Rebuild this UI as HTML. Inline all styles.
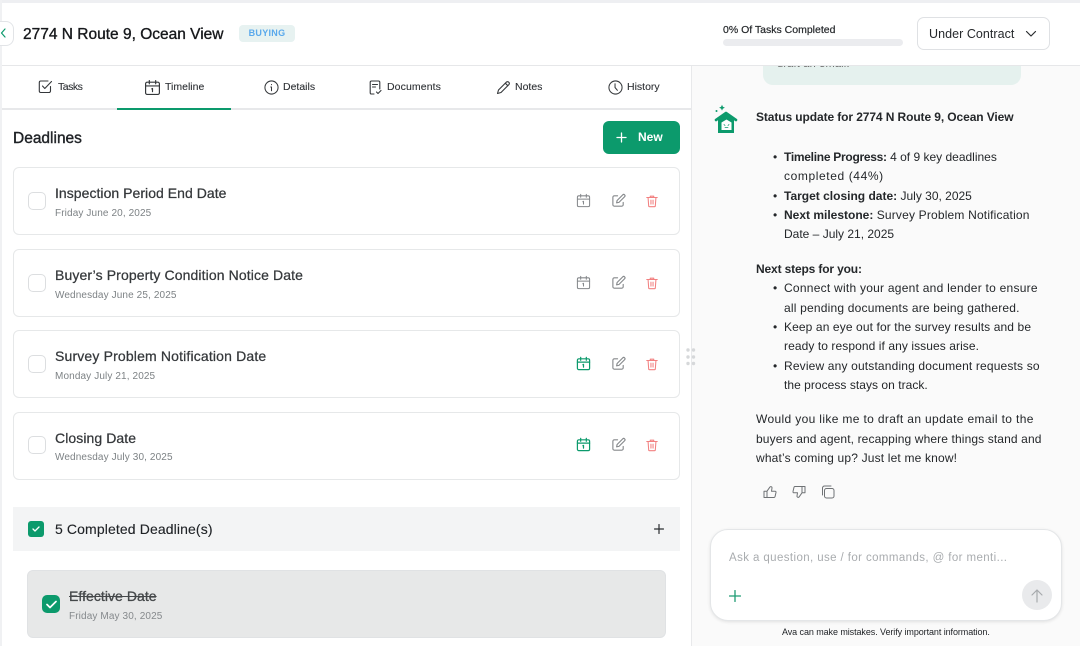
<!DOCTYPE html>
<html><head><meta charset="utf-8"><style>
html,body{margin:0;padding:0}
body{width:1080px;height:646px;overflow:hidden;position:relative;background:#fff;font-family:"Liberation Sans",sans-serif;color:#1f2226}
div,span.a,svg.a{position:absolute;box-sizing:border-box}
.t{white-space:nowrap}
.tab{font-size:10.5px;color:#2e3135;top:81px;line-height:12px;-webkit-text-stroke:.1px #2e3135}
.card{left:13px;width:667px;height:68px;background:#fff;border:1px solid #e6e8e9;border-radius:6px}
.cb{left:28px;width:18px;height:18px;border:1px solid #dcdee0;border-radius:5px;background:#fff}
.ti{left:55px;font-size:14px;line-height:16px;color:#35383b;font-weight:400;-webkit-text-stroke:.25px #35383b}
.dt{left:55px;font-size:10px;line-height:12px;color:#7d8285;letter-spacing:.12px}
.m{left:756px;font-size:12px;line-height:16px;color:#24272a}
b{font-weight:700}
svg{fill:none;stroke-linecap:round;stroke-linejoin:round}
</style></head><body>
<svg width="0" height="0" style="position:absolute"><defs>
<symbol id="cal" viewBox="0 0 16 16"><rect x="1.500" y="3" width="13" height="11.500" rx="1.500"/><path d="M1.500 6.500h13M5 1.500v3M11 1.500v3M7.300 9.300 8 8.900v3"/></symbol>
<symbol id="pen" viewBox="0 0 16 16"><path d="M7 3H3.500A1.500 1.500 0 0 0 2 4.500V12.500A1.500 1.500 0 0 0 3.500 14H11.500A1.500 1.500 0 0 0 13 12.500V10"/><path d="M6 10.500 6.500 8 12.500 2a1.300 1.300 0 0 1 2 2L8.500 10z"/></symbol>
<symbol id="tr" viewBox="0 0 16 16"><path d="M2 4h12M6 4V2.500h4V4M3.500 4l.7 9.500a1 1 0 0 0 1 1h5.600a1 1 0 0 0 1-1L12.500 4M6.800 7v4.500M9.200 7v4.500"/></symbol>
</defs></svg>

<!-- right panel -->
<div style="left:691px;top:65px;width:389px;height:581px;background:#fafafa;border-left:1px solid #e8e9eb"></div>
<div style="left:763px;top:50px;width:258px;height:35px;background:#e5f1ee;border-radius:0 0 10px 10px"></div>

<!-- header -->
<div style="left:0;top:0;width:1080px;height:66px;background:#fff;border-top:3px solid #eeeff2;border-bottom:1px solid #e6e7e9"></div>
<div style="left:777px;top:66px;width:80px;height:4px;overflow:hidden"><div class="t" style="left:0;top:-8px;font-size:11px;line-height:13px;color:#666;letter-spacing:.2px">draft an email.</div></div>
<div style="left:0;top:0;width:2px;height:646px;background:#f0f1f3"></div>
<div style="left:-12px;top:21px;width:26px;height:25px;background:#fff;border:1px solid #e2e4e7;border-radius:8px"></div>
<svg class="a" style="left:0;top:28px;stroke:#0c9a6c;stroke-width:1.200" width="6" height="10"><path d="M5 1 1.500 5 5 9"/></svg>
<div class="t" style="left:23px;top:25px;font-size:15.500px;line-height:19px;color:#17191c;-webkit-text-stroke:.35px #17191c">2774 N Route 9, Ocean View</div>
<div class="t" style="left:239px;top:25px;width:56px;height:17px;background:#e7f2f1;border-radius:4px;text-align:center;font-size:9px;line-height:17px;font-weight:700;color:#5aa9ec;letter-spacing:.3px">BUYING</div>
<div class="t" style="left:723px;top:24px;font-size:10.500px;line-height:13px;color:#26292c;-webkit-text-stroke:.2px #26292c">0% Of Tasks Completed</div>
<div style="left:723px;top:39px;width:180px;height:7px;background:#ebecef;border-radius:4px"></div>
<div style="left:917px;top:17px;width:133px;height:33px;background:#fff;border:1px solid #dfe1e4;border-radius:7px"></div>
<div class="t" style="left:929px;top:27px;font-size:12.500px;line-height:15px;color:#26292c;letter-spacing:.05px">Under Contract</div>
<svg class="a" style="left:1025px;top:30px;stroke:#2a2d30;stroke-width:1.200" width="12" height="8"><path d="M1.500 1.500 6 6l4.500-4.500"/></svg>

<!-- tabs -->
<div style="left:2px;top:108px;width:689px;height:2px;background:#e7e8ea"></div>
<div style="left:117px;top:108px;width:114px;height:2px;background:#0c9a6c"></div>
<svg class="a" style="left:38px;top:79px;stroke:#34373a;stroke-width:1.100" width="15" height="15" viewBox="0 0 15 15"><path d="M12.500 7.500V12a1.500 1.500 0 0 1-1.500 1.500H2.800A1.500 1.500 0 0 1 1.300 12V3.500A1.500 1.500 0 0 1 2.800 2h7.200"/><path d="M4.500 7l2.300 2.500L13.500 2.500"/></svg>
<div class="tab t" style="left:58px;letter-spacing:-.5px">Tasks</div>
<svg class="a" style="left:144px;top:79px;stroke:#34373a;stroke-width:1.100" width="17" height="17"><use href="#cal"/></svg>
<div class="tab t" style="left:165px">Timeline</div>
<svg class="a" style="left:264px;top:80px;stroke:#34373a;stroke-width:1.100" width="15" height="15" viewBox="0 0 16 16"><circle cx="8" cy="8" r="7"/><path d="M8 7.500V11.500M7.200 7.500H8M8 4.800v.3"/></svg>
<div class="tab t" style="left:283px">Details</div>
<svg class="a" style="left:369px;top:80px;stroke:#34373a;stroke-width:1.100" width="14" height="15" viewBox="0 0 14 15"><path d="M5 14H2.500A1.300 1.300 0 0 1 1.200 12.700V2.300A1.300 1.300 0 0 1 2.500 1h7A1.300 1.300 0 0 1 10.800 2.300V9M3.500 4.500h5M3.500 7h3M7.500 12l1.500 1.500 3-3"/></svg>
<div class="tab t" style="left:387px;letter-spacing:.1px">Documents</div>
<svg class="a" style="left:496px;top:80px;stroke:#34373a;stroke-width:1.100" width="15" height="15" viewBox="0 0 15 15"><path d="M1.500 13.500 2.500 10 10.500 2a1.800 1.800 0 0 1 2.500 2.500L5 12.500zM9.300 3.200l2.500 2.500"/></svg>
<div class="tab t" style="left:515px">Notes</div>
<svg class="a" style="left:608px;top:80px;stroke:#34373a;stroke-width:1.100" width="15" height="15" viewBox="0 0 16 16"><circle cx="8" cy="8" r="7"/><path d="M7.500 4v4l2.500 3"/></svg>
<div class="tab t" style="left:627px">History</div>

<div class="t" style="left:13px;top:130px;font-size:15.500px;line-height:18px;color:#1f2226;-webkit-text-stroke:.4px #1f2226">Deadlines</div>
<div style="left:603px;top:121px;width:77px;height:33px;background:#0c9a6c;border-radius:6px"></div>
<svg class="a" style="left:616px;top:132px;stroke:#fff;stroke-width:1.300" width="11" height="11"><path d="M5.500 1v9M1 5.500h9"/></svg>
<div class="t" style="left:638px;top:130px;font-size:12px;line-height:15px;color:#fff;font-weight:700">New</div>

<!-- cards -->
<div class="card" style="top:167px"></div>
<div class="cb" style="top:192px"></div>
<div class="ti t" style="top:185px;letter-spacing:.04px">Inspection Period End Date</div>
<div class="dt t" style="top:208px">Friday June 20, 2025</div>
<svg class="a" style="left:576px;top:193px;stroke:#85888b;stroke-width:1.100" width="15" height="15"><use href="#cal"/></svg>
<svg class="a" style="left:611px;top:193px;stroke:#85888b;stroke-width:1.200" width="15" height="15"><use href="#pen"/></svg>
<svg class="a" style="left:645px;top:194px;stroke:#f28080;stroke-width:1.200" width="14" height="14"><use href="#tr"/></svg>

<div class="card" style="top:249px"></div>
<div class="cb" style="top:274px"></div>
<div class="ti t" style="top:267px;letter-spacing:.11px">Buyer’s Property Condition Notice Date</div>
<div class="dt t" style="top:290px">Wednesday June 25, 2025</div>
<svg class="a" style="left:576px;top:275px;stroke:#85888b;stroke-width:1.100" width="15" height="15"><use href="#cal"/></svg>
<svg class="a" style="left:611px;top:275px;stroke:#85888b;stroke-width:1.200" width="15" height="15"><use href="#pen"/></svg>
<svg class="a" style="left:645px;top:276px;stroke:#f28080;stroke-width:1.200" width="14" height="14"><use href="#tr"/></svg>

<div class="card" style="top:330px"></div>
<div class="cb" style="top:355px"></div>
<div class="ti t" style="top:348px;letter-spacing:.16px">Survey Problem Notification Date</div>
<div class="dt t" style="top:371px">Monday July 21, 2025</div>
<svg class="a" style="left:576px;top:356px;stroke:#0c9a6c;stroke-width:1.300" width="15" height="15"><use href="#cal"/></svg>
<svg class="a" style="left:611px;top:356px;stroke:#85888b;stroke-width:1.200" width="15" height="15"><use href="#pen"/></svg>
<svg class="a" style="left:645px;top:357px;stroke:#f28080;stroke-width:1.200" width="14" height="14"><use href="#tr"/></svg>

<div class="card" style="top:412px"></div>
<div class="cb" style="top:436px"></div>
<div class="ti t" style="top:430px;letter-spacing:.08px">Closing Date</div>
<div class="dt t" style="top:452px">Wednesday July 30, 2025</div>
<svg class="a" style="left:576px;top:437px;stroke:#0c9a6c;stroke-width:1.300" width="15" height="15"><use href="#cal"/></svg>
<svg class="a" style="left:611px;top:437px;stroke:#85888b;stroke-width:1.200" width="15" height="15"><use href="#pen"/></svg>
<svg class="a" style="left:645px;top:438px;stroke:#f28080;stroke-width:1.200" width="14" height="14"><use href="#tr"/></svg>

<!-- drag handle -->
<svg class="a" style="left:686px;top:348px;fill:#d6d8da" width="10" height="18"><circle cx="2" cy="2" r="1.700"/><circle cx="7.500" cy="2" r="1.700"/><circle cx="2" cy="9" r="1.700"/><circle cx="7.500" cy="9" r="1.700"/><circle cx="2" cy="15.500" r="1.700"/><circle cx="7.500" cy="15.500" r="1.700"/></svg>

<!-- completed -->
<div style="left:13px;top:507px;width:667px;height:44px;background:#f3f4f5"></div>
<div style="left:28px;top:521px;width:16px;height:16px;background:#0c9a6c;border-radius:3px"></div>
<svg class="a" style="left:32px;top:526px;stroke:#fff;stroke-width:1.300" width="8" height="6"><path d="M1 3l2 2 4-4"/></svg>
<div class="t" style="left:55px;top:521px;font-size:14px;line-height:17px;color:#1f2226;letter-spacing:.12px;-webkit-text-stroke:.12px #1f2226">5 Completed Deadline(s)</div>
<svg class="a" style="left:654px;top:524px;stroke:#2a2d30;stroke-width:1.200" width="10" height="10"><path d="M5 .5v9M.5 5h9"/></svg>

<div style="left:27px;top:570px;width:639px;height:68px;background:#e7e8e8;border:1px solid #e0e2e4;border-radius:6px"></div>
<div style="left:42px;top:595px;width:18px;height:18px;background:#0c9a6c;border-radius:5px"></div>
<svg class="a" style="left:46px;top:600px;stroke:#fff;stroke-width:1.700" width="11" height="9"><path d="M1 4.500 4 7.500 10 1.500"/></svg>
<div class="t" style="left:69px;top:588px;font-size:14px;line-height:16px;color:#45484a;text-decoration:line-through;-webkit-text-stroke:.3px #45484a;letter-spacing:.05px">Effective Date</div>
<div class="dt t" style="left:69px;top:611px;color:#85898c">Friday May 30, 2025</div>

<!-- chat -->
<svg class="a" style="left:714px;top:104px" width="24" height="30" viewBox="0 0 24 30"><path d="M8 .8l.9 2 2 .9-2 .9-.9 2-.9-2-2-.9 2-.9z" fill="#0c9a6c"/><circle cx="2.500" cy="7" r="1" fill="#0c9a6c"/><path d="M4 15V29H20V15L12 9z" fill="#0c9a6c"/><path d="M2 16 12 9 22 16" stroke="#0c9a6c" stroke-width="2.600"/><path d="M7.500 26V18.500L12.500 15.500 17.500 18.500V26z" fill="#fff"/><path d="M10 20.500l1 1M15 20.500l-1 1M11 23.500h3" stroke="#0c9a6c" stroke-width=".8"/></svg>
<div class="m t" style="top:109px;letter-spacing:-.1px"><b>Status update for 2774 N Route 9, Ocean View</b></div>

<div class="m t" style="left:784px;top:149px"><b style="letter-spacing:-.28px">Timeline Progress:</b> 4 of 9 key deadlines</div>
<div class="m t" style="left:784px;top:168px;letter-spacing:.6px">completed (44%)</div>
<div class="m t" style="left:784px;top:188px"><b>Target closing date:</b> July 30, 2025</div>
<div class="m t" style="left:784px;top:207px"><b>Next milestone:</b> <span style="letter-spacing:.18px">Survey Problem Notification</span></div>
<div class="m t" style="left:784px;top:226px">Date – July 21, 2025</div>
<div class="m t" style="left:773px;top:149px">•</div>
<div class="m t" style="left:773px;top:188px">•</div>
<div class="m t" style="left:773px;top:207px">•</div>

<div class="m t" style="top:261px;letter-spacing:-.15px"><b>Next steps for you:</b></div>
<div class="m t" style="left:773px;top:280px">•</div>
<div class="m t" style="left:784px;top:280px;letter-spacing:.25px">Connect with your agent and lender to ensure</div>
<div class="m t" style="left:784px;top:300px;letter-spacing:.2px">all pending documents are being gathered.</div>
<div class="m t" style="left:773px;top:319px">•</div>
<div class="m t" style="left:784px;top:319px;letter-spacing:.11px">Keep an eye out for the survey results and be</div>
<div class="m t" style="left:784px;top:338px;letter-spacing:.08px">ready to respond if any issues arise.</div>
<div class="m t" style="left:773px;top:358px">•</div>
<div class="m t" style="left:784px;top:358px;letter-spacing:.16px">Review any outstanding document requests so</div>
<div class="m t" style="left:784px;top:377px;letter-spacing:.04px">the process stays on track.</div>

<div class="m t" style="top:411px;letter-spacing:.35px">Would you like me to draft an update email to the</div>
<div class="m t" style="top:431px;letter-spacing:.12px">buyers and agent, recapping where things stand and</div>
<div class="m t" style="top:450px;letter-spacing:.17px">what’s coming up? Just let me know!</div>

<svg class="a" style="left:763px;top:485px;stroke:#6f7275;stroke-width:1" width="14" height="14" viewBox="0 0 14 14"><path d="M4 6.200V12.500H11a1 1 0 0 0 1-.8L13 7.500a1 1 0 0 0-1-1.300H8.500L9 3a1.200 1.200 0 0 0-2.200-.8zM1 6.200H4V12.500H1z"/></svg>
<svg class="a" style="left:792px;top:485px;stroke:#6f7275;stroke-width:1" width="14" height="14" viewBox="0 0 14 14"><path d="M10 7.800V1.500H3a1 1 0 0 0-1 .8L1 6.500a1 1 0 0 0 1 1.300H5.500L5 11a1.200 1.200 0 0 0 2.200.8zM13 7.800H10V1.500H13z"/></svg>
<svg class="a" style="left:821px;top:485px;stroke:#6f7275;stroke-width:1" width="14" height="14" viewBox="0 0 14 14"><rect x="3.500" y="3.500" width="9.500" height="9.500" rx="2"/><path d="M1.500 10V3A2 2 0 0 1 3.500 1H10"/></svg>

<div style="left:710px;top:529px;width:352px;height:92px;background:#fff;border:1px solid #e4e6e8;border-radius:18px;box-shadow:0 1px 3px rgba(0,0,0,.1)"></div>
<div class="t" style="left:729px;top:551px;font-size:11.500px;line-height:14px;color:#a9acaf;letter-spacing:.4px">Ask a question, use / for commands, @ for menti...</div>
<svg class="a" style="left:729px;top:590px;stroke:#1f9c74;stroke-width:1.300" width="12" height="12"><path d="M6 .5v11M.5 6h11"/></svg>
<div style="left:1022px;top:580px;width:30px;height:30px;background:#e9eaec;border-radius:50%"></div>
<svg class="a" style="left:1031px;top:589px;stroke:#a7aaad;stroke-width:1.200" width="12" height="14"><path d="M6 13V1M1 6l5-5 5 5"/></svg>
<div class="t" style="left:782px;top:627px;font-size:9px;line-height:11px;color:#1f2226;letter-spacing:-.08px">Ava can make mistakes. Verify important information.</div>
</body></html>
